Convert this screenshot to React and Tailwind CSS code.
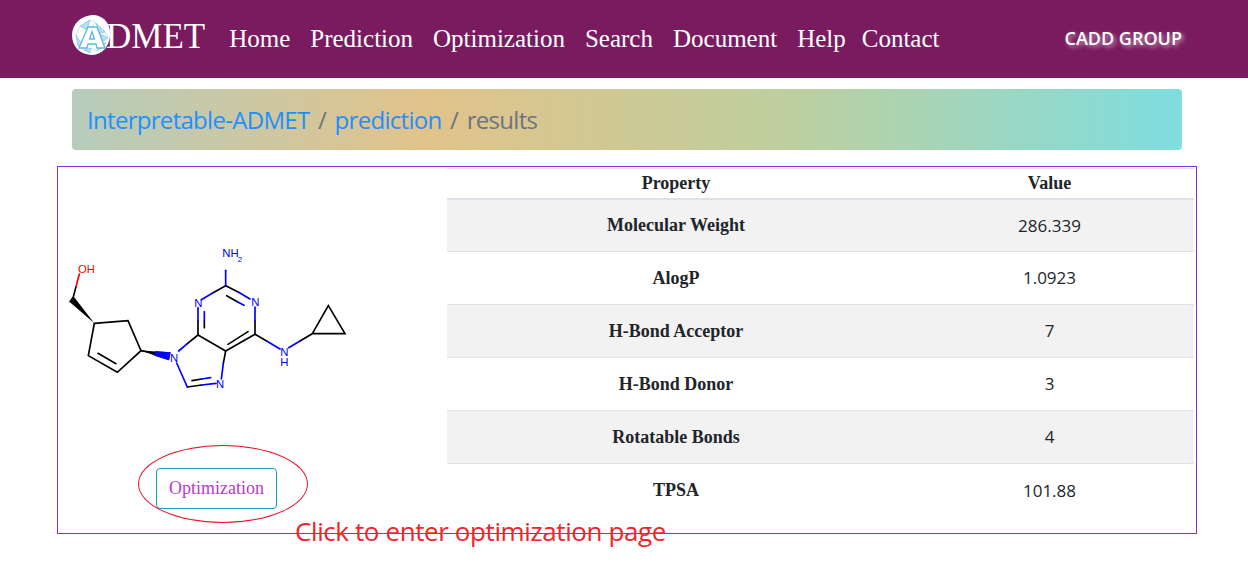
import React from "react";

const navLinks = ["Home", "Prediction", "Optimization", "Search", "Document", "Help", "Contact"];

const rows = [
  ["Molecular Weight", "286.339"],
  ["AlogP", "1.0923"],
  ["H-Bond Acceptor", "7"],
  ["H-Bond Donor", "3"],
  ["Rotatable Bonds", "4"],
  ["TPSA", "101.88"],
];

const Logo = () => (
  <svg width="40" height="40" viewBox="0 0 40 40" className="shrink-0">
    <path d="M20 0C31 0 39 8 38 21C37 32 30 40 19 40C8 39 0 32 0 20C0 9 9 1 20 0Z" fill="#fff" />
    <g fill="#b5dff2" stroke="#7cc4e6" strokeWidth="0.7">
      <path d="M8 11L18 5L15 15Z" />
      <path d="M24 8L33 17L27 18Z" />
      <path d="M27 18L36 23L30 27Z" />
      <path d="M4 20L9 28L6 31Z" />
      <path d="M28 30L34 28L25 36Z" />
      <path d="M12 35L19 33L18 38Z" />
    </g>
    <g fill="none" stroke="#9ad2ec" strokeWidth="0.6">
      <path d="M8 11L4 20M18 5L24 8M15 15L24 8M33 17L36 23M30 27L34 28M6 31L12 35M19 33L25 36" />
    </g>
    <path d="M7 33L16 12H25L33 33H25L24 29H16L15 33ZM17.500 24H22.500L20 16.500Z" fill="#fff" stroke="#5fb6e0" strokeWidth="1.300" fillRule="evenodd" />
  </svg>
);

const Molecule = () => (
  <svg viewBox="-6 0 1170 510" className="w-[390px] h-[170px]" fill="none" strokeWidth="5" strokeLinecap="round">
    {/* carbon skeleton */}
    <g stroke="#000">
      <path d="M103 265L204 257L243 347L172 412L85 362Z" />
      <path d="M114 355L168 386" />
      <path d="M243 347L285 354" />
      <path d="M497 152L536 172M500 182L532 200" />
      <path d="M497 152L458 174" />
      <path d="M414 300L497 348L585 298" />
      <path d="M504 328L564 290" />
      <path d="M585 298V258M585 298L620 318" />
      <path d="M414 300V258M433 278V258" />
      <path d="M414 300L382 326" />
      <path d="M497 348L490 385" />
      <path d="M382 456L425 450M396 437L425 432" />
      <path d="M720 318L757 296L855 296L805 212L757 296" />
      <path d="M30 200L40 186L48 155" />
    </g>
    <path d="M103 265L30 202L42 186Z" fill="#000" />
    <path d="M243 347L332 352L327 376Z" fill="#000" />
    <path d="M285 348L332 352L327 376L283 362Z" fill="#00f" />
    {/* hetero bonds */}
    <g stroke="#00f">
      <path d="M497 152V106" />
      <path d="M536 172L570 192M532 200L552 211" />
      <path d="M458 174L424 194" />
      <path d="M585 258V216" />
      <path d="M414 258V218M433 258V230" />
      <path d="M620 318L660 342M720 318L686 338" />
      <path d="M382 326L356 348" />
      <path d="M490 385L484 432" />
      <path d="M350 384L382 456" />
      <path d="M425 450L468 445M425 432L452 428" />
    </g>
    <path d="M48 155L58 117" stroke="#f00" />
    <g fontFamily="'Liberation Sans', sans-serif" fontSize="34" fill="#00f" stroke="none">
      <text x="487" y="66">NH</text>
      <text x="533" y="80" fontSize="24">2</text>
      <text x="403" y="216">N</text>
      <text x="574" y="214">N</text>
      <text x="330" y="382">N</text>
      <text x="468" y="458">N</text>
      <text x="661" y="364">N</text>
      <text x="661" y="392">H</text>
      <text x="54" y="114" fill="#f00">OH</text>
    </g>
  </svg>
);

export default function App() {
  return (
    <div className="relative min-h-[577px] bg-white font-['Liberation_Serif',serif]">
      <header className="h-[78px] bg-[#7b1b5f] pl-[72px] pr-[66px] pb-[2px] flex items-center text-white">
        <div className="flex items-center -mt-[6px]">
          <Logo />
          <span className="text-[35px] leading-none -ml-[6px] pt-[2px]">DMET</span>
        </div>
        <nav className="flex gap-[20px] ml-[24px] text-[25px] leading-none">
          {navLinks.map((link) => (
            <a key={link} href="#" className={link === "Contact" ? "-ml-[4px]" : ""}>{link}</a>
          ))}
        </nav>
        <span className="ml-auto font-['Open_Sans',sans-serif] font-semibold text-[18px] [text-shadow:2px_2px_4px_rgba(255,255,255,0.6)]">
          CADD GROUP
        </span>
      </header>

      <div className="ml-[72px] mr-[66px] mt-[11px] h-[61px] rounded-[4px] px-[15px] flex items-center gap-[8.5px] text-[24px] tracking-[-0.7px] font-['Open_Sans',sans-serif] bg-[linear-gradient(90deg,#b6ccbb_0%,#e2c38a_32%,#bdcf9f_65%,#7fdde0_100%)]">
        <a href="#" className="text-[#1e90ff]">Interpretable-ADMET</a>
        <span className="text-[#6c757d]">/</span>
        <a href="#" className="text-[#1e90ff]">prediction</a>
        <span className="text-[#6c757d]">/</span>
        <span className="text-[#6c757d]">results</span>
      </div>

      <main className="mx-[57px] mt-[16px] h-[368px] w-[1140px] border border-[#8a2be2] flex">
        <section className="w-[389px] shrink-0 flex flex-col items-start">
          <div className="mt-[68px]">
            <Molecule />
          </div>
          <button className="mt-[63px] ml-[98px] w-[121px] h-[41px] border border-[#17a2b8] rounded-[4px] text-[18px] text-[#b73bd0]">
            Optimization
          </button>
        </section>

        <table className="mt-[1px] w-[747px] h-fit border-collapse text-[#212529] table-fixed border-t border-[#dee2e6]">
          <thead>
            <tr className="h-[30px] border-b-2 border-[#dee2e6]">
              <th className="w-[458px] text-[18px] font-bold">Property</th>
              <th className="text-[18px] font-bold">Value</th>
            </tr>
          </thead>
          <tbody>
            {rows.map(([name, value], i) => (
              <tr key={name} className={`h-[53px] ${i < 5 ? "border-b border-[#dee2e6]" : ""} ${i % 2 === 0 ? "bg-[#f2f2f2]" : ""}`}>
                <td className="text-center text-[18px] font-bold">{name}</td>
                <td className="text-center text-[17px] font-['Open_Sans',sans-serif]">{value}</td>
              </tr>
            ))}
          </tbody>
        </table>
      </main>

      {/* red hand-drawn annotation over the button */}
      <div className="absolute left-[138px] top-[445px] w-[170px] h-[78px] rounded-[50%] border border-[#e8112d] pointer-events-none" />
      <span className="absolute left-[295px] top-[513px] text-[26px] tracking-[-0.4px] leading-[36px] text-[#f0242c] font-['Open_Sans',sans-serif] whitespace-nowrap">
        Click to enter optimization page
      </span>
    </div>
  );
}
